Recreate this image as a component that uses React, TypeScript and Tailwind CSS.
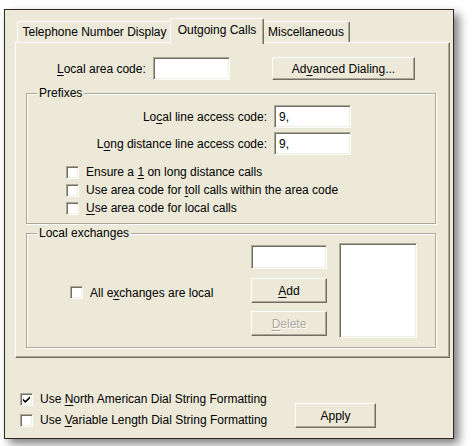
import React from "react";

const raised =
  "bg-[#ECE9D8] border border-t-white border-l-white border-r-[#716F64] border-b-[#716F64] shadow-[inset_-1px_-1px_0_#ACA899]";
const sunken =
  "bg-white border border-t-[#ACA899] border-l-[#ACA899] border-r-white border-b-white shadow-[inset_1px_1px_0_#716F64,inset_-1px_-1px_0_#F1EFE2]";

function U({ children }: { children: React.ReactNode }) {
  return <span className="underline underline-offset-[2px] decoration-1">{children}</span>;
}

function Check({ checked = false }: { checked?: boolean }) {
  return (
    <div className={`w-[13px] h-[13px] shrink-0 ${sunken} flex items-center justify-center`}>
      {checked && (
        <svg width="9" height="9" viewBox="0 0 9 9">
          <path d="M1 3.5 L3.3 5.8 L8 1.2 L8 3.4 L3.3 8 L1 5.8 Z" fill="#000" />
        </svg>
      )}
    </div>
  );
}

function CheckRow({ checked, children }: { checked?: boolean; children: React.ReactNode }) {
  return (
    <div className="flex items-center h-[18px] gap-[7px]">
      <Check checked={checked} />
      <span className="whitespace-nowrap">{children}</span>
    </div>
  );
}

function Group({ label, className, children }: { label: string; className: string; children: React.ReactNode }) {
  return (
    <div
      className={`relative border border-[#ACA899] shadow-[inset_1px_1px_0_#fff,1px_1px_0_#fff] ${className}`}
    >
      <span className="absolute left-[10px] -top-[8px] px-[2px] bg-[#ECE9D8] leading-[14px]">{label}</span>
      {children}
    </div>
  );
}

export default function App() {
  return (
    <div className="w-[472px] h-[446px] bg-white pl-[4px] pt-[9px] font-['Liberation_Sans',Arial,sans-serif] text-[12px] leading-[14px] text-black">
      <div className="w-[450px] h-[430px] border border-[#2a2a2a] bg-[#ECE9D8] shadow-[5px_5px_9px_rgba(0,0,0,0.5)] flex flex-col">
        {/* tab control */}
        <div className="ml-[10px] mt-[8px] w-[435px] flex flex-col">
          <div className="h-[24px] flex items-end pl-[2px]">
            <div className="w-[155px] h-[21px] bg-[#ECE9D8] border-t border-l border-r border-t-white border-l-white border-r-[#716F64] shadow-[inset_-1px_0_0_#ACA899] rounded-t-[2px] flex items-center justify-center whitespace-nowrap">
              Telephone Number Display
            </div>
            <div className="relative z-10 -mx-[2px] w-[94px] h-[26px] -mb-[2px] bg-[#ECE9D8] border-t border-l border-r border-t-white border-l-white border-r-[#716F64] shadow-[inset_-1px_0_0_#ACA899] rounded-t-[2px] flex items-center justify-center pb-[3px] whitespace-nowrap">
              Outgoing Calls
            </div>
            <div className="w-[88px] h-[21px] bg-[#ECE9D8] border-t border-l border-r border-t-white border-l-white border-r-[#716F64] shadow-[inset_-1px_0_0_#ACA899] rounded-t-[2px] flex items-center justify-center whitespace-nowrap">
              Miscellaneous
            </div>
          </div>
          <div className="h-[316px] border border-t-white border-l-white border-r-[#716F64] border-b-[#716F64] shadow-[inset_-1px_-1px_0_#ACA899] flex flex-col">
            {/* row 1 */}
            <div className="mt-[14px] ml-[41px] h-[23px] flex items-center">
              <span className="w-[90px] whitespace-nowrap">
                <U>L</U>ocal area code:
              </span>
              <div className={`ml-[6px] w-[77px] h-[23px] ${sunken}`} />
              <div className={`ml-[42px] w-[143px] h-[23px] ${raised} flex items-center justify-center`}>
                <span>
                  Ad<U>v</U>anced Dialing...
                </span>
              </div>
            </div>

            {/* Prefixes */}
            <Group label="Prefixes" className="ml-[10px] mt-[13px] w-[410px] h-[131px] flex flex-col pt-[11px]">
              <div className="flex items-center h-[23px]">
                <span className="w-[240px] text-right whitespace-nowrap">
                  Lo<U>c</U>al line access code:
                </span>
                <div className={`ml-[7px] w-[77px] h-[23px] ${sunken} flex items-center pl-[4px]`}>9,</div>
              </div>
              <div className="flex items-center h-[23px] mt-[4px]">
                <span className="w-[240px] text-right whitespace-nowrap">
                  L<U>o</U>ng distance line access code:
                </span>
                <div className={`ml-[7px] w-[77px] h-[23px] ${sunken} flex items-center pl-[4px]`}>9,</div>
              </div>
              <div className="ml-[39px] mt-[8px] flex flex-col">
                <CheckRow>
                  Ensure a <U>1</U> on long distance calls
                </CheckRow>
                <CheckRow>
                  Use area code for <U>t</U>oll calls within the area code
                </CheckRow>
                <CheckRow>
                  <U>U</U>se area code for local calls
                </CheckRow>
              </div>
            </Group>

            {/* Local exchanges */}
            <Group label="Local exchanges" className="ml-[10px] mt-[9px] w-[410px] h-[115px] flex items-center pr-[18px]">
              <div className="flex-1 pl-[43px] pt-[4px]">
                <CheckRow>
                  All e<U>x</U>changes are local
                </CheckRow>
              </div>
              <div className="w-[76px] flex flex-col">
                <div className={`h-[24px] ${sunken}`} />
                <div className={`mt-[9px] h-[25px] ${raised} flex items-center justify-center`}>
                  <span>
                    <U>A</U>dd
                  </span>
                </div>
                <div className={`mt-[8px] h-[25px] ${raised} flex items-center justify-center`}>
                  <span className="text-[#ACA899] [text-shadow:1px_1px_0_#fff]">
                    <U>D</U>elete
                  </span>
                </div>
              </div>
              <div className={`ml-[12px] w-[78px] h-[95px] ${sunken}`} />
            </Group>
          </div>
        </div>

        {/* bottom */}
        <div className="mt-[32px] flex items-end">
          <div className="pl-[15px] w-[290px] flex flex-col gap-[3px]">
            <CheckRow checked>
              Use <U>N</U>orth American Dial String Formatting
            </CheckRow>
            <CheckRow>
              Use <U>V</U>ariable Length Dial String Formatting
            </CheckRow>
          </div>
          <div className={`mb-[1px] w-[81px] h-[25px] ${raised} flex items-center justify-center`}>Apply</div>
        </div>
      </div>
    </div>
  );
}
